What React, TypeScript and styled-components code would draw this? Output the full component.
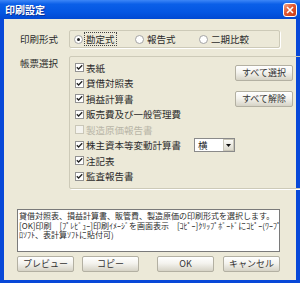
import React from "react";
import styled, { createGlobalStyle } from "styled-components";

const GlobalStyle = createGlobalStyle`
  html, body {
    margin: 0;
    padding: 0;
    background: #ece9d8;
    overflow: hidden;
  }
  body {
    font-family: "Noto Sans CJK JP", "Liberation Sans", sans-serif;
    font-size: 9.5px;
    color: #2b2b2b;
  }
`;

const Window = styled.div`
  width: 300px;
  height: 283px;
  display: flex;
  flex-direction: column;
`;

const TitleBar = styled.div`
  height: 19px;
  flex: none;
  display: flex;
  align-items: center;
  justify-content: space-between;
  padding: 0 3px 0 5px;
  background: linear-gradient(#3d86f7 0%, #0b5fe8 22%, #0456e2 65%, #0149d2 100%);
  color: #fff;
  font-size: 10px;
  font-weight: bold;
  text-shadow: 1px 1px 0 #0b2f96;
`;

const CloseButton = styled.div`
  width: 14px;
  height: 14px;
  box-sizing: border-box;
  border: 1px solid #fff;
  border-radius: 3px;
  background: linear-gradient(135deg, #f3a68a 0%, #e2562f 45%, #c83c17 100%);
  display: flex;
  align-items: center;
  justify-content: center;
`;

const Frame = styled.div`
  flex: 1;
  display: flex;
  flex-direction: column;
  background: #ece9d8;
  border: 0 solid #0848d8;
  border-width: 0 4px 3px 4px;
  padding: 11px 16px 8px 13px;
`;

const FieldRow = styled.div<{ $gap?: number }>`
  display: flex;
  padding-left: 3px;
  margin-top: ${(p) => p.$gap ?? 0}px;
`;

const FieldLabel = styled.div<{ $top?: boolean }>`
  width: 49px;
  flex: none;
  line-height: 12px;
  padding-top: ${(p) => (p.$top ? 1 : 0)}px;
  align-self: ${(p) => (p.$top ? "flex-start" : "center")};
`;

const GroupBox = styled.div<{ $h: number }>`
  flex: 1;
  height: ${(p) => p.$h}px;
  box-sizing: border-box;
  border: 1px solid #cdcab8;
  border-radius: 2px;
  box-shadow: 1px 1px 0 #fff;
`;

const RadioBox = styled(GroupBox)`
  display: grid;
  grid-template-columns: 61px 64px 1fr;
  align-items: center;
  padding-left: 4px;
`;

const RadioItem = styled.label`
  display: flex;
  align-items: center;
  gap: 2px;
`;

const RadioDot = styled.span<{ $on?: boolean }>`
  width: 9px;
  height: 9px;
  box-sizing: border-box;
  border-radius: 50%;
  border: 1px solid #a3a3a3;
  background: #fff;
  display: flex;
  align-items: center;
  justify-content: center;
  &::after {
    content: "";
    width: 3px;
    height: 3px;
    border-radius: 50%;
    background: ${(p) => (p.$on ? "#222" : "transparent")};
  }
`;

const FocusText = styled.span<{ $focus?: boolean }>`
  padding: 0 1px;
  line-height: 12px;
  outline: ${(p) => (p.$focus ? "1px dotted #444" : "none")};
`;

const SelectBox = styled(GroupBox)`
  display: flex;
  padding: 3px 8px 0 5px;
`;

const CheckList = styled.div`
  flex: 1;
  min-width: 0;
  display: flex;
  flex-direction: column;
`;

const CheckRow = styled.div<{ $disabled?: boolean }>`
  height: 15.5px;
  display: flex;
  align-items: center;
  gap: 2px;
  white-space: nowrap;
  color: ${(p) => (p.$disabled ? "#b8b5a7" : "#2b2b2b")};
`;

const CheckMark = styled.span<{ $disabled?: boolean }>`
  width: 9px;
  height: 9px;
  flex: none;
  box-sizing: border-box;
  border: 1px solid ${(p) => (p.$disabled ? "#cac7b8" : "#939393")};
  background: ${(p) => (p.$disabled ? "#f4f3ee" : "#fff")};
  display: flex;
  align-items: center;
  justify-content: center;
`;

const CheckText = styled.span<{ $w?: number }>`
  width: ${(p) => (p.$w ? `${p.$w}px` : "auto")};
  flex: none;
`;

const Combo = styled.div`
  width: 41px;
  height: 14px;
  flex: none;
  box-sizing: border-box;
  border: 1px solid #8a8a8a;
  background: #fff;
  display: flex;
  align-items: center;
  justify-content: space-between;
  padding-left: 3px;
`;

const ComboArrow = styled.span`
  width: 11px;
  height: 12px;
  box-sizing: border-box;
  border: 1px solid #c9c6b8;
  background: linear-gradient(#fbfbf8, #dcd9cd);
  display: flex;
  align-items: center;
  justify-content: center;
`;

const SideButtons = styled.div`
  width: 58px;
  flex: none;
  display: flex;
  flex-direction: column;
  gap: 10px;
  padding-top: 5px;
`;

const PushButton = styled.button<{ $w?: number }>`
  width: ${(p) => p.$w ?? 58}px;
  height: 16px;
  box-sizing: border-box;
  padding: 0;
  font: inherit;
  font-size: 9px;
  line-height: 14px;
  color: #333;
  border: 1px solid #b3b0a2;
  border-radius: 2px;
  background: linear-gradient(#ffffff 0%, #f4f3ee 45%, #d6d3c6 100%);
`;

const Message = styled.div`
  height: 43px;
  margin-top: 20px;
  box-sizing: border-box;
  border: 1px solid #7a7a7a;
  background: #fff;
  padding: 1px 0 0 1px;
  font-size: 8px;
  line-height: 9.5px;
  white-space: nowrap;
  overflow: hidden;
`;

const ButtonBar = styled.div`
  display: flex;
  justify-content: space-between;
  margin-top: 4px;
`;

const ButtonGroup = styled.div<{ $gap: number }>`
  display: flex;
  gap: ${(p) => p.$gap}px;
`;

const Tick = () => (
  <svg width="7" height="7" viewBox="0 0 7 7">
    <path d="M0.8 3.2 L2.6 5 L6.2 1.2" fill="none" stroke="#222" strokeWidth="1.3" />
  </svg>
);

const reports = [
  { name: "表紙", on: true },
  { name: "貸借対照表", on: true },
  { name: "損益計算書", on: true },
  { name: "販売費及び一般管理費", on: true },
  { name: "製造原価報告書", on: false, disabled: true },
  { name: "株主資本等変動計算書", on: true, combo: true },
  { name: "注記表", on: true },
  { name: "監査報告書", on: true },
];

const App: React.FC = () => {
  return (
    <>
      <GlobalStyle />
      <Window>
        <TitleBar>
          <span>印刷設定</span>
          <CloseButton>
            <svg width="8" height="8" viewBox="0 0 8 8">
              <path d="M1 1 L7 7 M7 1 L1 7" stroke="#fff" strokeWidth="1.6" />
            </svg>
          </CloseButton>
        </TitleBar>
        <Frame>
          <FieldRow>
            <FieldLabel>印刷形式</FieldLabel>
            <RadioBox $h={18}>
              <RadioItem>
                <RadioDot $on />
                <FocusText $focus>勘定式</FocusText>
              </RadioItem>
              <RadioItem>
                <RadioDot />
                <FocusText>報告式</FocusText>
              </RadioItem>
              <RadioItem>
                <RadioDot />
                <FocusText>二期比較</FocusText>
              </RadioItem>
            </RadioBox>
          </FieldRow>

          <FieldRow $gap={8}>
            <FieldLabel $top>帳票選択</FieldLabel>
            <SelectBox $h={133}>
              <CheckList>
                {reports.map((r) => (
                  <CheckRow key={r.name} $disabled={r.disabled}>
                    <CheckMark $disabled={r.disabled}>{r.on && <Tick />}</CheckMark>
                    <CheckText $w={r.combo ? 106 : undefined}>{r.name}</CheckText>
                    {r.combo && (
                      <Combo>
                        <span>横</span>
                        <ComboArrow>
                          <svg width="5" height="3" viewBox="0 0 5 3">
                            <path d="M0 0 H5 L2.5 3 Z" fill="#111" />
                          </svg>
                        </ComboArrow>
                      </Combo>
                    )}
                  </CheckRow>
                ))}
              </CheckList>
              <SideButtons>
                <PushButton>すべて選択</PushButton>
                <PushButton>すべて解除</PushButton>
              </SideButtons>
            </SelectBox>
          </FieldRow>

          <Message>
            貸借対照表、損益計算書、販管費、製造原価の印刷形式を選択します。
            <br />
            [OK]印刷　[ﾌﾟﾚﾋﾞｭｰ]印刷ｲﾒｰｼﾞを画面表示　[ｺﾋﾟｰ]ｸﾘｯﾌﾟﾎﾞｰﾄﾞにｺﾋﾟｰ(ﾜｰﾌﾟ
            <br />
            ﾛｿﾌﾄ、表計算ｿﾌﾄに貼付可)
          </Message>

          <ButtonBar>
            <ButtonGroup $gap={8}>
              <PushButton $w={57}>プレビュー</PushButton>
              <PushButton $w={57}>コピー</PushButton>
            </ButtonGroup>
            <ButtonGroup $gap={9}>
              <PushButton $w={57}>OK</PushButton>
              <PushButton $w={57}>キャンセル</PushButton>
            </ButtonGroup>
          </ButtonBar>
        </Frame>
      </Window>
    </>
  );
};

export default App;
